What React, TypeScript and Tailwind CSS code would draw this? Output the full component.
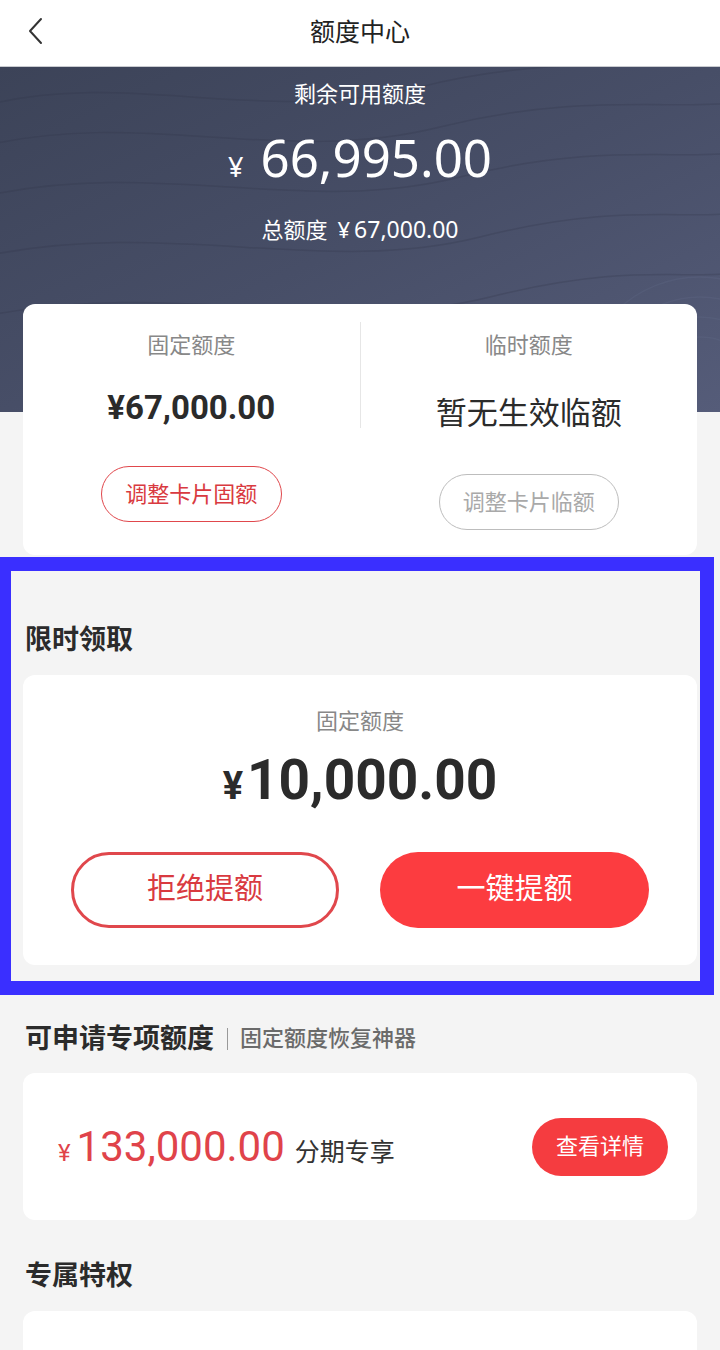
import React from "react";

const font = { fontFamily: '"Roboto", "Noto Sans CJK SC", sans-serif' };
const ns = { fontFamily: '"Noto Sans", "Noto Sans CJK SC", sans-serif' };

export default function App() {
  return (
    <div className="w-[720px] min-h-[1350px] bg-[#f4f4f4] overflow-hidden" style={font}>
      {/* Header */}
      <div className="relative h-[67px] bg-white flex items-center justify-center border-b border-[#c9cbd0]">
        <svg className="absolute left-[26px] top-[17px]" width="20" height="28" viewBox="0 0 20 28" fill="none">
          <path d="M15 2 L4 14 L15 26" stroke="#333" strokeWidth="2" strokeLinecap="round" strokeLinejoin="round" />
        </svg>
        <span className="text-[25px] leading-[30px] text-[#222]">额度中心</span>
      </div>

      {/* Hero */}
      <div className="relative h-[345px] bg-gradient-to-br from-[#3c4358] via-[#474e67] to-[#555c79] overflow-hidden">
        <svg className="absolute inset-0" width="720" height="345" viewBox="0 0 720 345" fill="none">
          <g stroke="#2f3547" strokeOpacity="0.25" strokeWidth="1.5">
            <path d="M-20 40 C 120 0, 260 60, 420 20 S 700 10, 760 -10" />
            <path d="M-20 80 C 140 40, 280 100, 440 60 S 700 50, 760 30" />
            <path d="M-20 130 C 160 90, 300 150, 460 110 S 700 100, 760 80" />
            <path d="M-20 190 C 170 150, 320 210, 480 170 S 700 160, 760 140" />
            <path d="M-20 250 C 180 210, 330 270, 490 230 S 700 220, 760 200" />
          </g>
          <g stroke="#6a7190" strokeOpacity="0.2" strokeWidth="1.5">
            <circle cx="700" cy="330" r="60" />
            <circle cx="700" cy="330" r="80" />
            <circle cx="700" cy="330" r="100" />
            <circle cx="700" cy="330" r="120" />
          </g>
        </svg>
        <div className="relative flex flex-col items-center pt-[15px] text-white">
          <div className="text-[22px] leading-[26px]">剩余可用额度</div>
          <div className="mt-[21px] flex items-baseline h-[56px]">
            <span className="text-[27px] leading-[56px] mr-[17px]" style={ns}>¥</span>
            <span className="text-[51px] leading-[56px]" style={ns}>66,995.00</span>
          </div>
          <div className="mt-[31px] text-[22px] leading-[26px] flex items-baseline">
            <span>总额度</span>
            <span className="ml-[10px] mr-[4px]" style={ns}>¥</span>
            <span className="text-[23px]" style={ns}>67,000.00</span>
          </div>
        </div>
      </div>

      {/* Card 1 */}
      <div className="relative -mt-[108px] mx-[23px] h-[251px] bg-white rounded-[12px] flex">
        <div className="flex-1 flex flex-col items-center pt-[29px]">
          <div className="text-[22px] leading-[26px] text-[#888]">固定额度</div>
          <div className="mt-[30px] text-[33px] leading-[38px] font-bold text-[#2b2b2b]">¥67,000.00</div>
          <div className="mt-[39px] w-[181px] h-[56px] rounded-full border-[1.5px] border-[#e0474c] flex items-center justify-center text-[22px] text-[#d93a40]">
            调整卡片固额
          </div>
        </div>
        <div className="mt-[18px] w-px h-[106px] bg-[#e6e6e6]" />
        <div className="flex-1 flex flex-col items-center pt-[29px]">
          <div className="text-[22px] leading-[26px] text-[#888]">临时额度</div>
          <div className="mt-[35px] text-[31px] leading-[40px] text-[#2b2b2b]">暂无生效临额</div>
          <div className="mt-[40px] w-[180px] h-[56px] rounded-full border-[1.5px] border-[#bdbdbd] flex items-center justify-center text-[22px] text-[#a9a9a9]">
            调整卡片临额
          </div>
        </div>
      </div>

      {/* 限时领取 */}
      <div className="relative mt-[2px] pt-[66px] pb-[30px]">
        <div className="px-[25px] text-[27px] leading-[34px] font-bold text-[#2b2b2b]">限时领取</div>
        <div className="mt-[18px] mx-[23px] h-[290px] bg-white rounded-[12px] flex flex-col items-center pt-[34px]">
          <div className="text-[22px] leading-[26px] text-[#888]">固定额度</div>
          <div className="mt-[15px] h-[60px] flex items-baseline font-bold text-[#2b2b2b]">
            <span className="text-[38px] leading-[60px] mr-[4px]">¥</span>
            <span className="text-[55px] leading-[60px]">10,000.00</span>
          </div>
          <div className="mt-[42px] flex gap-[41px]">
            <div className="w-[268px] h-[76px] rounded-full border-[3px] border-[#e0474c] flex items-center justify-center text-[29px] text-[#d93a40]">
              拒绝提额
            </div>
            <div className="w-[269px] h-[76px] rounded-full bg-[#fc3c40] flex items-center justify-center text-[29px] text-white">
              一键提额
            </div>
          </div>
        </div>
        <div className="absolute top-0 bottom-0 left-0 right-[6px] border-t-[14px] border-b-[14px] border-l-[11px] border-r-[14px] border-[#3a2fff] pointer-events-none" />
      </div>

      {/* 可申请专项额度 */}
      <div className="mt-[27px] px-[25px] flex items-center h-[34px]">
        <span className="text-[27px] leading-[34px] font-bold text-[#2b2b2b]">可申请专项额度</span>
        <span className="ml-[13px] w-px h-[22px] bg-[#999]" />
        <span className="ml-[12px] text-[22px] leading-[28px] font-medium text-[#6a6a6a]">固定额度恢复神器</span>
      </div>
      <div className="mt-[17px] mx-[23px] h-[147px] bg-white rounded-[12px] flex items-center pl-[35px] pr-[29px]">
        <div className="flex items-baseline flex-1">
          <span className="text-[24px] text-[#e0434a] mr-[6px]">¥</span>
          <span className="text-[42px] leading-[50px] text-[#e0434a]">133,000.00</span>
          <span className="ml-[10px] text-[25px] text-[#333]">分期专享</span>
        </div>
        <div className="w-[136px] h-[58px] rounded-full bg-[#f53c40] flex items-center justify-center text-[22px] text-white">
          查看详情
        </div>
      </div>

      {/* 专属特权 */}
      <div className="mt-[39px] px-[25px] text-[27px] leading-[34px] font-bold text-[#2b2b2b]">专属特权</div>
      <div className="mt-[18px] mx-[23px] h-[200px] bg-white rounded-[12px]" />
    </div>
  );
}
